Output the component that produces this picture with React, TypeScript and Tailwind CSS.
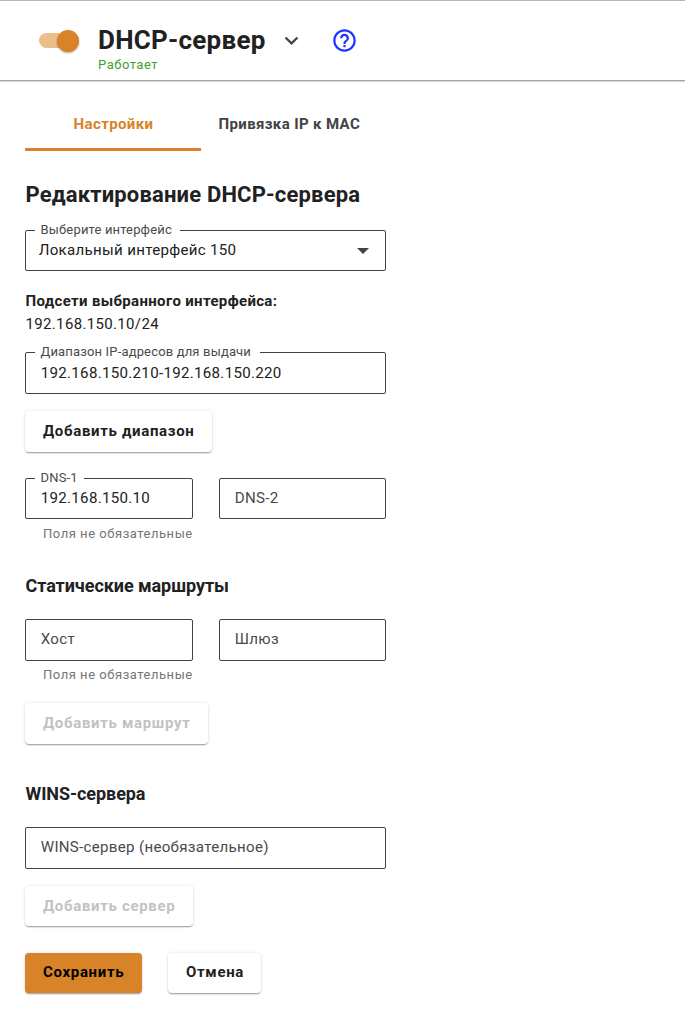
import { MdExpandMore, MdHelpOutline } from "react-icons/md";
import type { ReactNode } from "react";

function Field({
  label,
  value,
  placeholder,
  notch = "",
  className = "",
  select = false,
}: {
  label?: string;
  value?: string;
  placeholder?: string;
  notch?: string;
  className?: string;
  select?: boolean;
}) {
  return (
    <div
      className={`relative flex items-center justify-between rounded-[2px] border border-[#424242] ${select ? "pl-[12.7px]" : "pl-[14.7px]"} ${className}`}
    >
      {label && (
        <span
          className={`absolute -top-[9px] left-[9px] h-4 whitespace-nowrap bg-white pl-[5.5px] text-[13px] leading-4 tracking-[0.16px] text-[#4a4a4a] ${notch}`}
        >
          {label}
        </span>
      )}
      <span
        className={`whitespace-nowrap pb-[2px] text-[15.1px] leading-5 tracking-[0.3px] ${value ? "text-[#212121]" : "text-[#4a4a4a]"}`}
      >
        {value ?? placeholder}
      </span>
      {select && (
        <svg className="mr-[16px] h-[6px] w-[12px]" viewBox="0 0 12 6">
          <path d="M0 0h12L6 6z" fill="#424242" />
        </svg>
      )}
    </div>
  );
}

function Button({
  children,
  disabled = false,
  primary = false,
  className = "",
}: {
  children: ReactNode;
  disabled?: boolean;
  primary?: boolean;
  className?: string;
}) {
  return (
    <button
      disabled={disabled}
      className={`flex items-center whitespace-nowrap rounded-[4px] pl-[18px] text-[15px] font-bold leading-5 tracking-[0.67px] shadow-[0_2px_2px_-1px_rgba(0,0,0,0.26),0_1px_1px_rgba(0,0,0,0.14),0_0_3px_rgba(0,0,0,0.14)] ${
        primary ? "bg-[#d98328] text-black" : disabled ? "bg-white text-[#c2c2c2]" : "bg-white text-[#212121]"
      } ${className}`}
    >
      {children}
    </button>
  );
}

export default function App() {
  return (
    <div className="h-[1016px] w-[685px] overflow-hidden bg-white font-['Roboto',sans-serif] text-[#212121]">
      <header className="flex h-[81px] items-start border-b border-t border-b-[#a3a3a3] border-t-[#bfb3af] pl-[39px] shadow-[0_1px_1px_rgba(0,0,0,0.14)]">
        <div className="mt-[32px] flex h-[15px] w-10 items-center justify-end rounded-full bg-[#ebc088]">
          <div className="size-[22px] shrink-0 rounded-full bg-[#d98328] shadow-[0_1px_2px_rgba(0,0,0,0.35)]" />
        </div>
        <div className="ml-[19px] mt-[23px] w-[180px]">
          <h1 className="whitespace-nowrap text-[26px] font-bold leading-8 tracking-[0.25px]">DHCP-сервер</h1>
          <p className="mt-px text-[13px] leading-4 tracking-[0.5px] text-[#43a02f]">Работает</p>
        </div>
        <MdExpandMore className="mt-[26px] size-[27px] text-[#424242]" />
        <MdHelpOutline className="ml-[26px] mt-[26px] size-[27px] text-[#1f35ff]" />
      </header>

      <nav className="flex h-[70px] text-[15px] font-bold leading-5 tracking-[0.37px]">
        <div className="ml-[25px] flex w-[176px] items-center justify-center border-b-[3px] border-[#d98328] pl-px pt-[19px] text-[#d98328]">
          Настройки
        </div>
        <div className="flex items-center whitespace-nowrap pb-[3px] pl-[17.5px] pt-[19px] text-[#424242]">
          Привязка IP к MAC
        </div>
      </nav>

      <main className="w-[386px] pl-[25px]">
        <h2 className="mt-[30px] h-[49px] whitespace-nowrap pl-[0.5px] text-[22px] font-bold leading-[28px] tracking-[0.17px]">
          Редактирование DHCP-сервера
        </h2>
        <Field select label="Выберите интерфейс" value="Локальный интерфейс 150" notch="w-[145px]" className="h-[41px]" />
        <p className="mt-[20px] h-5 whitespace-nowrap pl-[0.5px] text-[15px] font-bold leading-5 tracking-[0.34px]">
          Подсети выбранного интерфейса:
        </p>
        <p className="mt-[3px] h-5 pl-[0.5px] text-[15px] leading-5 tracking-[0.34px]">192.168.150.10/24</p>
        <Field
          label="Диапазон IP-адресов для выдачи"
          value="192.168.150.210-192.168.150.220"
          notch="w-[225px]"
          className="mt-[18px] h-[42px] pt-px"
        />
        <Button className="mt-[17px] h-[41px] w-[187px] pb-px">Добавить диапазон</Button>
        <div className="mt-[26px] flex gap-[26px]">
          <Field label="DNS-1" value="192.168.150.10" notch="w-[49px]" className="h-[41px] w-[168px]" />
          <Field placeholder="DNS-2" className="h-[41px] w-[167px]" />
        </div>
        <p className="ml-[18px] mt-[7px] h-4 whitespace-nowrap text-[13px] leading-4 tracking-[0.53px] text-[#757575]">
          Поля не обязательные
        </p>

        <h3 className="mt-[32px] h-6 whitespace-nowrap pl-[0.5px] text-[18px] font-bold leading-6 tracking-[-0.07px]">
          Статические маршруты
        </h3>
        <div className="mt-[21px] flex gap-[26px]">
          <Field placeholder="Хост" className="h-[42px] w-[168px]" />
          <Field placeholder="Шлюз" className="h-[42px] w-[167px]" />
        </div>
        <p className="ml-[18px] mt-[6px] h-4 whitespace-nowrap text-[13px] leading-4 tracking-[0.53px] text-[#757575]">
          Поля не обязательные
        </p>
        <Button disabled className="mt-[20px] h-[41px] w-[183px] pb-px">Добавить маршрут</Button>

        <h3 className="mt-[38px] h-6 whitespace-nowrap pl-[0.5px] text-[18px] font-bold leading-6 tracking-[-0.07px]">WINS-сервера</h3>
        <Field placeholder="WINS-сервер (необязательное)" className="mt-[21px] h-[42px]" />
        <Button disabled className="mt-[17px] h-[40px] w-[168px] pb-px">Добавить сервер</Button>
        <div className="mt-[27px] flex gap-[26px]">
          <Button primary className="h-[40px] w-[117px] pb-[2px]">Сохранить</Button>
          <Button className="h-[40px] w-[93px] pb-[2px]">Отмена</Button>
        </div>
      </main>
    </div>
  );
}
